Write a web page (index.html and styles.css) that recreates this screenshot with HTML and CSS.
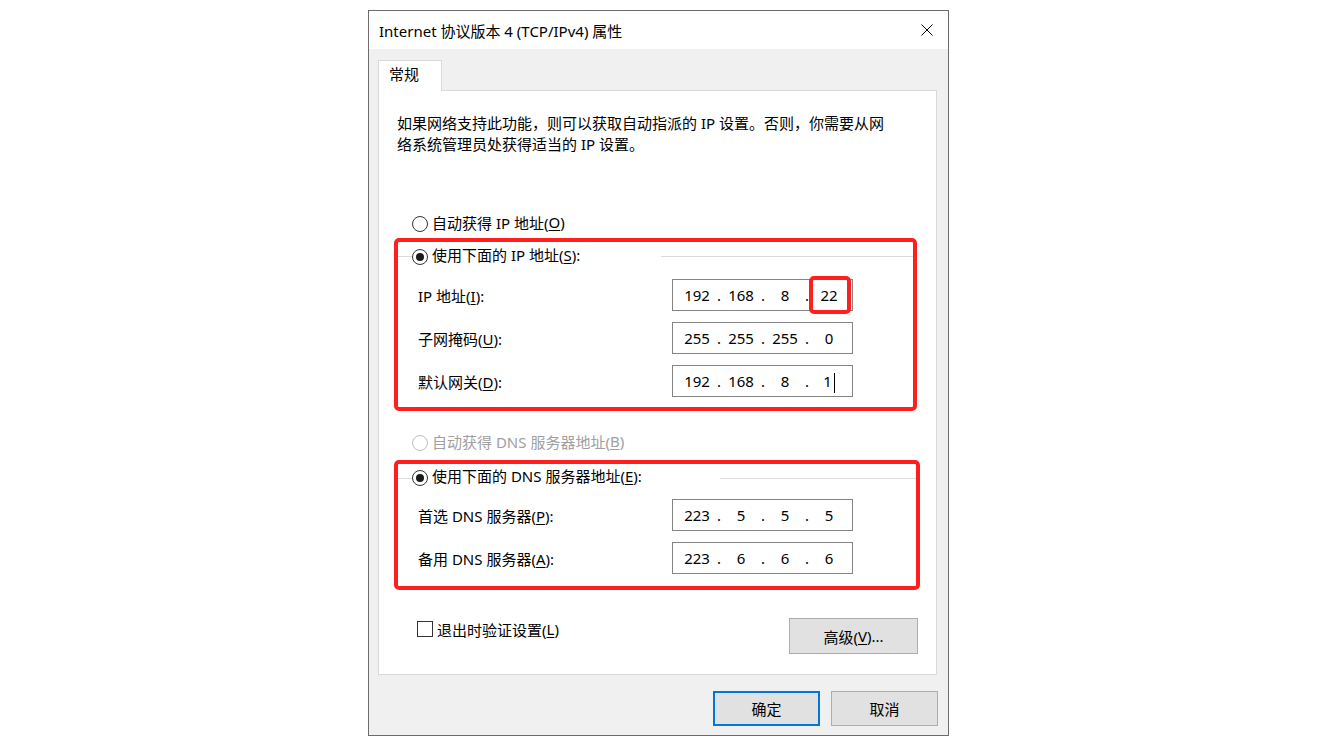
FILE: index.html
```html
<!DOCTYPE html>
<html lang="zh-CN">
<head>
    <meta charset="UTF-8">
    <title>Internet 协议版本 4 (TCP/IPv4) 属性</title>
    <link rel="stylesheet" href="styles.css">
</head>
<body>
    <div class="dialog">
        <div class="titlebar">
            <span class="title">Internet 协议版本 4 (TCP/IPv4) 属性</span>
            <span class="close">
                <svg width="12" height="12" viewBox="0 0 12 12"><path d="M0.5 0.5 L11.5 11.5 M11.5 0.5 L0.5 11.5" stroke="#000" stroke-width="1" fill="none"/></svg>
            </span>
        </div>

        <div class="client">
            <div class="tabs">
                <div class="tab">常规</div>
                <div class="tab-fill"></div>
            </div>

            <div class="panel">
                <p class="intro">如果网络支持此功能，则可以获取自动指派的 IP 设置。否则，你需要从网<br>络系统管理员处获得适当的 IP 设置。</p>

                <div class="opt opt-auto-ip"><span class="radio"></span>自动获得 IP 地址(<u>O</u>)</div>

                <div class="group group-ip">
                    <div class="group-head">
                        <span class="rule-l"></span>
                        <span class="head-label"><span class="radio on"></span>使用下面的 IP 地址(<u>S</u>):</span>
                        <span class="rule-r"></span>
                    </div>
                    <div class="fields">
                        <div class="field">
                            <span class="field-label">IP 地址(<u>I</u>):</span>
                            <div class="ipbox">
                                <span class="oct">192</span><span class="dot">.</span><span class="oct">168</span><span class="dot">.</span><span class="oct">8</span><span class="dot">.</span><span class="oct">22<span class="mark"></span></span>
                            </div>
                        </div>
                        <div class="field">
                            <span class="field-label">子网掩码(<u>U</u>):</span>
                            <div class="ipbox">
                                <span class="oct">255</span><span class="dot">.</span><span class="oct">255</span><span class="dot">.</span><span class="oct">255</span><span class="dot">.</span><span class="oct">0</span>
                            </div>
                        </div>
                        <div class="field">
                            <span class="field-label">默认网关(<u>D</u>):</span>
                            <div class="ipbox">
                                <span class="oct">192</span><span class="dot">.</span><span class="oct">168</span><span class="dot">.</span><span class="oct">8</span><span class="dot">.</span><span class="oct">1<span class="caret"></span></span>
                            </div>
                        </div>
                    </div>
                </div>

                <div class="opt opt-auto-dns disabled"><span class="radio"></span>自动获得 DNS 服务器地址(<u>B</u>)</div>

                <div class="group group-dns">
                    <div class="group-head">
                        <span class="rule-l"></span>
                        <span class="head-label"><span class="radio on"></span>使用下面的 DNS 服务器地址(<u>E</u>):</span>
                        <span class="rule-r"></span>
                    </div>
                    <div class="fields">
                        <div class="field">
                            <span class="field-label">首选 DNS 服务器(<u>P</u>):</span>
                            <div class="ipbox">
                                <span class="oct">223</span><span class="dot">.</span><span class="oct">5</span><span class="dot">.</span><span class="oct">5</span><span class="dot">.</span><span class="oct">5</span>
                            </div>
                        </div>
                        <div class="field">
                            <span class="field-label">备用 DNS 服务器(<u>A</u>):</span>
                            <div class="ipbox">
                                <span class="oct">223</span><span class="dot">.</span><span class="oct">6</span><span class="dot">.</span><span class="oct">6</span><span class="dot">.</span><span class="oct">6</span>
                            </div>
                        </div>
                    </div>
                </div>

                <div class="bottom">
                    <div class="check"><span class="box"></span>退出时验证设置(<u>L</u>)</div>
                    <div class="btn btn-adv">高级(<u>V</u>)...</div>
                </div>
            </div>
        </div>

        <div class="footer">
            <div class="btn default">确定</div>
            <div class="btn">取消</div>
        </div>
    </div>
</body>
</html>
```

FILE: styles.css
```css
* {
    box-sizing: border-box;
}
body {
    margin: 0;
    background: #fff;
    font-family: "Noto Sans", "Noto Sans CJK SC", sans-serif;
    font-size: 15px;
    color: #000;
}
u {
    text-underline-offset: 2px;
}
.dialog {
    width: 581px;
    height: 726px;
    margin: 10px 0 0 368px;
    border: 1px solid #6b6b6b;
    background: #f0f0f0;
}
.titlebar {
    height: 38px;
    background: #fff;
    display: flex;
    align-items: center;
    justify-content: space-between;
    padding-left: 10px;
}
.close {
    width: 42px;
    height: 38px;
    display: flex;
    align-items: center;
    justify-content: center;
}
.close svg {
    display: block;
}
.client {
    padding: 11px 11px 0 9px;
}
.tabs {
    display: flex;
    height: 31px;
}
.tab {
    width: 64px;
    height: 31px;
    background: #fff;
    border: 1px solid #d9d9d9;
    border-bottom: none;
    padding-left: 10px;
    line-height: 27px;
}
.tab-fill {
    flex: 1;
    border-bottom: 1px solid #d9d9d9;
}
.panel {
    height: 584px;
    background: #fff;
    border: 1px solid #d9d9d9;
    border-top: none;
    padding: 22px 18px 0 15px;
}
.intro {
    margin: 0 0 0 3px;
    line-height: 21px;
}
.opt {
    display: flex;
    align-items: center;
    height: 22px;
    margin-left: 18px;
}
.opt-auto-ip {
    margin-top: 56px;
}
.opt-auto-dns {
    margin-top: 19px;
}
.opt.disabled {
    color: #a0a0a0;
}
.radio {
    width: 16px;
    height: 16px;
    flex: none;
    border: 1px solid #333;
    border-radius: 50%;
    background: #fff;
    margin: 4px 4px 0 0;
    display: flex;
    align-items: center;
    justify-content: center;
}
.disabled .radio {
    border-color: #bfbfbf;
}
.radio.on::after {
    content: "";
    width: 8px;
    height: 8px;
    border-radius: 50%;
    background: #1a1a1a;
}
.group {
    border: 4px solid #ff1f1f;
    border-radius: 5px;
}
.group-ip {
    width: 523px;
    margin-top: 5px;
}
.group-dns {
    width: 526px;
    margin-top: 8px;
}
.group-head {
    display: flex;
    align-items: center;
    height: 29px;
}
.group-dns .group-head {
    height: 28px;
}
.rule-l {
    width: 14px;
    height: 1px;
    background: #dcdcdc;
}
.rule-r {
    flex: 1;
    height: 1px;
    background: #dcdcdc;
}
/* text sits 2px above the row centre, the radio on it */
.head-label {
    display: flex;
    align-items: flex-start;
    width: 249px;
    height: 24px;
    line-height: 20px;
}
.group-head .radio {
    margin-top: 4px;
}
.group-dns .head-label {
    width: 308px;
}
.fields {
    display: flex;
    flex-direction: column;
    gap: 11px;
    padding: 8px 0 10px 20px;
}
.group-dns .fields {
    padding: 7px 0 12px 20px;
}
.field {
    display: flex;
    align-items: center;
}
.field-label {
    width: 254px;
}
.ipbox {
    width: 181px;
    height: 32px;
    border: 1px solid #848484;
    display: flex;
    padding-left: 7px;
    line-height: 30px;
}
.oct {
    width: 34px;
    text-align: center;
    position: relative;
}
.dot {
    width: 10px;
    text-align: center;
}
.mark {
    position: absolute;
    top: -4px;
    bottom: -4px;
    left: -3px;
    right: -5px;
    border: 4px solid #ff1f1f;
    border-radius: 5px;
}
.caret {
    display: inline-block;
    width: 1px;
    height: 20px;
    background: #000;
    vertical-align: middle;
    margin-left: 2px;
}
.bottom {
    display: flex;
    justify-content: space-between;
    align-items: flex-start;
    margin-top: 28px;
}
.check {
    display: flex;
    align-items: center;
    height: 20px;
    margin: 1px 0 0 23px;
}
.box {
    width: 16px;
    height: 16px;
    border: 1px solid #333;
    background: #fff;
    margin-right: 4px;
}
.btn {
    height: 35px;
    background: #e1e1e1;
    border: 1px solid #adadad;
    display: flex;
    align-items: center;
    justify-content: center;
}
.btn-adv {
    width: 129px;
    height: 36px;
}
.footer {
    display: flex;
    justify-content: flex-end;
    gap: 11px;
    padding: 16px 10px 0 0;
}
.footer .btn {
    width: 107px;
}
.btn.default {
    border: 2px solid #0078d7;
}
```
